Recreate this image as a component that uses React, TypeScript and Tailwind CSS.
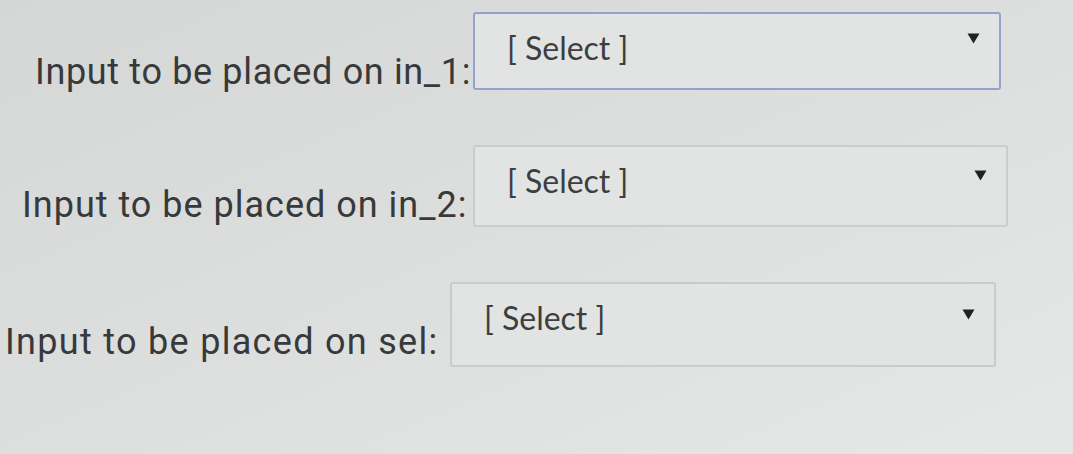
import React from "react";

function Arrow() {
  return (
    <svg width="13" height="11" viewBox="0 0 13 11" className="shrink-0">
      <path d="M0.5 0.5 L12.5 0.5 L6.5 10.5 Z" fill="#1f2124" />
    </svg>
  );
}

type RowProps = {
  label: string;
  pl: string;
  mt: string;
  labelW: string;
  tracking: string;
  boxW: string;
  boxH: string;
  border: string;
  gap: string;
  arrowPt: string;
};

function Row({ label, pl, mt, labelW, tracking, boxW, boxH, border, gap, arrowPt }: RowProps) {
  return (
    <div className={`flex items-start ${pl} ${mt}`}>
      <span
        className={`${labelW} ${tracking} mt-[40px] shrink-0 whitespace-nowrap text-[36px] leading-[40px] text-[#37393a]`}
        style={{ fontFamily: "Roboto, 'Noto Sans', sans-serif" }}
      >
        {label}
      </span>
      <div
        className={`${gap} ${boxW} ${boxH} ${border} flex shrink-0 items-start justify-between rounded-[3px] border-2 bg-[#e2e4e3] pl-[32px] pr-[19px] pt-[15px]`}
      >
        <span
          className="text-[32px] leading-[38px] text-[#3c3e40]"
          style={{ fontFamily: "Lato, 'Open Sans', sans-serif" }}
        >
          [ Select ]
        </span>
        <div className={arrowPt}>
          <Arrow />
        </div>
      </div>
    </div>
  );
}

export default function App() {
  return (
    <div className="h-[454px] w-[1073px] overflow-hidden bg-gradient-to-br from-[#d5d7d6] via-[#dddfde] to-[#e6e8e7] pt-[12px]">
      <Row
        label="Input to be placed on in_1:"
        pl="pl-[35px]"
        mt="mt-0"
        labelW="w-[430px]"
        tracking="tracking-[0.65px]"
        boxW="w-[528px]"
        boxH="h-[78px]"
        border="border-[#95a2cb]"
        gap="ml-[8px]"
        arrowPt="pt-[4px]"
      />
      <Row
        label="Input to be placed on in_2:"
        pl="pl-[22px]"
        mt="mt-[53px]"
        labelW="w-[440px]"
        tracking="tracking-[1px]"
        boxW="w-[535px]"
        boxH="h-[82px]"
        border="border-[#caccce]"
        gap="ml-[11px]"
        arrowPt="pt-[8px]"
      />
      <Row
        label="Input to be placed on sel:"
        pl="pl-[5px]"
        mt="mt-[55px]"
        labelW="w-[433px]"
        tracking="tracking-[1.3px]"
        boxW="w-[546px]"
        boxH="h-[85px]"
        border="border-[#c9cbcc]"
        gap="ml-[12px]"
        arrowPt="pt-[10px]"
      />
    </div>
  );
}
